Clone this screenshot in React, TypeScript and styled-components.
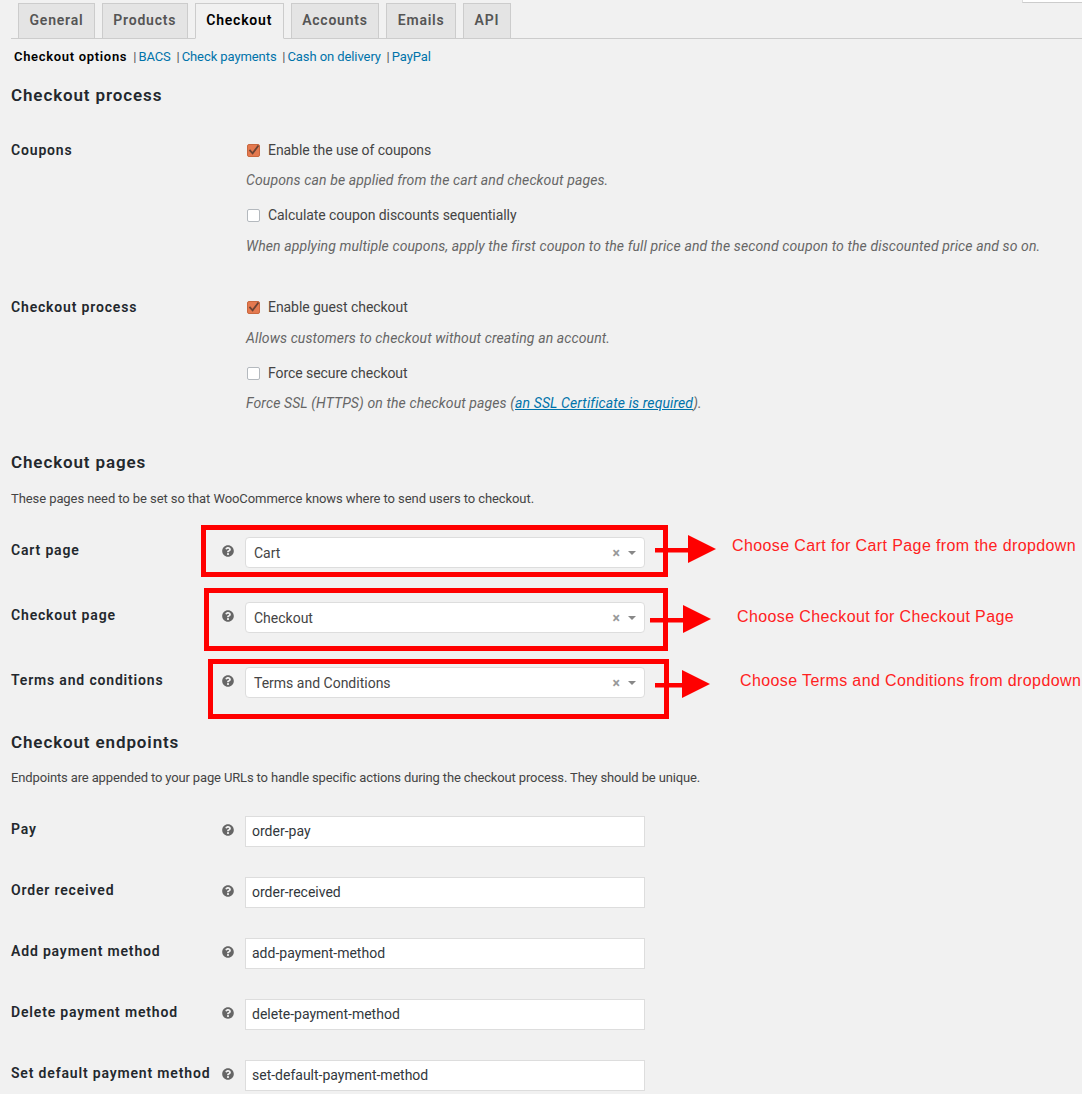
import React from "react";
import styled, { createGlobalStyle } from "styled-components";
import { FaQuestionCircle } from "react-icons/fa";

const Global = createGlobalStyle`
  html, body { margin: 0; padding: 0; background: #f1f1f1; }
  body { font-family: Roboto, "Liberation Sans", sans-serif; font-size: 14px; color: #444; }
`;

const Page = styled.div`
  position: relative;
  width: 1082px;
  height: 1094px;
  overflow: hidden;
  padding-left: 11px;
  box-sizing: border-box;
`;

const Corner = styled.div`
  position: absolute;
  top: 0;
  right: 0;
  width: 59px;
  height: 2px;
  background: #fff;
  border-left: 1px solid #ddd;
  border-bottom: 1px solid #ccc;
`;

const TabBar = styled.nav`
  display: flex;
  gap: 7px;
  padding: 3px 0 0 7px;
  height: 35px;
  border-bottom: 1px solid #ccc;
`;

const Tab = styled.a<{ $active?: boolean }>`
  box-sizing: border-box;
  padding: 0 10.5px 2px;
  display: flex;
  align-items: center;
  font-size: 14px;
  font-weight: 600;
  letter-spacing: 0.78px;
  color: ${(p) => (p.$active ? "#000" : "#555")};
  background: ${(p) => (p.$active ? "#f1f1f1" : "#e4e4e4")};
  border: 1px solid #ccc;
  border-bottom: ${(p) => (p.$active ? "1px solid #f1f1f1" : "none")};
  height: ${(p) => (p.$active ? "36px" : "35px")};
`;

const SubNav = styled.div`
  display: flex;
  align-items: center;
  height: 20px;
  margin-top: 7px;
  padding-left: 3px;
  font-size: 13px;
  color: #555;
`;

const SubCurrent = styled.b`
  color: #000;
  font-weight: 600;
  letter-spacing: 0.68px;
  margin-right: 6px;
`;

const SubLink = styled.a`
  color: #0073aa;
  margin: 0 5.7px 0 2px;
  letter-spacing: -0.08px;
`;

const Heading = styled.h2<{ $top: number }>`
  margin: ${(p) => p.$top}px 0 0;
  font-size: 17px;
  line-height: 22px;
  font-weight: 600;
  letter-spacing: 0.88px;
  color: #23282d;
`;

const Intro = styled.p<{ $top: number; $track: number }>`
  margin: ${(p) => p.$top}px 0 0;
  font-size: 13px;
  line-height: 20px;
  letter-spacing: ${(p) => p.$track}px;
  color: #444;
`;

const OptionRow = styled.div<{ $top: number }>`
  display: flex;
  margin-top: ${(p) => p.$top}px;
`;

const Label = styled.div`
  width: 235px;
  flex: none;
  font-weight: 600;
  letter-spacing: 0.83px;
  line-height: 20px;
  color: #23282d;
`;

const Options = styled.div`
  display: flex;
  flex-direction: column;
`;

const CheckLine = styled.label<{ $gap?: number }>`
  display: flex;
  align-items: center;
  height: 20px;
  margin-top: ${(p) => p.$gap ?? 0}px;
  letter-spacing: -0.06px;
  color: #444;
`;

const Box = styled.span<{ $on?: boolean }>`
  width: 11px;
  height: 11px;
  margin: 0 8px 0 1px;
  border: 1px solid ${(p) => (p.$on ? "#c9683f" : "#b4b9be")};
  border-radius: 2px;
  background: ${(p) => (p.$on ? "#e4794f" : "#fff")};
  display: flex;
  align-items: center;
  justify-content: center;
`;

const CheckMark = styled.svg`
  overflow: visible;
`;

const Description = styled.div<{ $top: number }>`
  margin-top: ${(p) => p.$top}px;
  height: 20px;
  line-height: 20px;
  font-style: italic;
  letter-spacing: 0.11px;
  color: #666;
`;

const DescLink = styled.a`
  color: #0073aa;
  text-decoration: underline;
`;

const FieldGroup = styled.div<{ $top: number }>`
  margin-top: ${(p) => p.$top}px;
`;

const FieldRow = styled.div<{ $pitch: number }>`
  display: flex;
  height: ${(p) => p.$pitch}px;
`;

const FieldLabel = styled(Label)`
  width: 211px;
  padding-top: 3px;
`;

const HelpCell = styled.div`
  width: 23px;
  flex: none;
  padding-top: 8px;
  color: #666;
  font-size: 12px;
  line-height: 12px;
`;

const Select = styled.div`
  width: 400px;
  height: 31px;
  box-sizing: border-box;
  background: #fff;
  border: 1px solid #ddd;
  border-radius: 4px;
  display: flex;
  align-items: center;
  padding: 0 8px;
  color: #444;
`;

const SelectValue = styled.span`
  flex: 1;
`;

const Clear = styled.span`
  color: #999;
  font-size: 14px;
  font-weight: 700;
  margin-right: 8px;
`;

const Caret = styled.span`
  width: 0;
  height: 0;
  border-left: 4px solid transparent;
  border-right: 4px solid transparent;
  border-top: 4px solid #888;
`;

const TextInput = styled.input`
  width: 400px;
  height: 31px;
  box-sizing: border-box;
  background: #fff;
  border: 1px solid #ddd;
  padding: 0 6px 2px;
  font: inherit;
  color: #32373c;
  outline: none;
`;

/* annotations painted over the screenshot */
const RedFrame = styled.div<{ $x: number; $y: number; $w: number; $h: number }>`
  position: absolute;
  left: ${(p) => p.$x}px;
  top: ${(p) => p.$y}px;
  width: ${(p) => p.$w}px;
  height: ${(p) => p.$h}px;
  box-sizing: border-box;
  border: 5px solid #f00;
`;

const Note = styled.div<{ $x: number; $y: number }>`
  position: absolute;
  left: ${(p) => p.$x}px;
  top: ${(p) => p.$y}px;
  font-family: "Liberation Sans", Arial, sans-serif;
  font-size: 16px;
  line-height: 20px;
  letter-spacing: 0.39px;
  white-space: nowrap;
  color: #f22;
`;

const ArrowSvg = styled.svg<{ $x: number; $y: number }>`
  position: absolute;
  left: ${(p) => p.$x}px;
  top: ${(p) => p.$y}px;
`;

const Arrow = ({ x, y, stem }: { x: number; y: number; stem: number }) => (
  <ArrowSvg $x={x} $y={y} width={stem + 28} height={28} viewBox={`0 0 ${stem + 28} 28`}>
    <rect x={0} y={13} width={stem + 1} height={4.5} fill="#f00" />
    <polygon points={`${stem},0 ${stem + 28},14 ${stem},28`} fill="#f00" />
  </ArrowSvg>
);

const Check = () => (
  <CheckMark width="9" height="9" viewBox="0 0 10 10">
    <path d="M0.5 4.4 L4 8.2 L10.5 -0.6" fill="none" stroke="#6a4334" strokeWidth="2" />
  </CheckMark>
);

const Help = () => (
  <HelpCell>
    <FaQuestionCircle />
  </HelpCell>
);

const SelectRow = ({ label, value, pitch }: { label: string; value: string; pitch: number }) => (
  <FieldRow $pitch={pitch}>
    <FieldLabel>{label}</FieldLabel>
    <Help />
    <Select>
      <SelectValue>{value}</SelectValue>
      <Clear>×</Clear>
      <Caret />
    </Select>
  </FieldRow>
);

const InputRow = ({ label, value }: { label: string; value: string }) => (
  <FieldRow $pitch={61}>
    <FieldLabel>{label}</FieldLabel>
    <Help />
    <TextInput defaultValue={value} />
  </FieldRow>
);

export default function App() {
  return (
    <Page>
      <Global />
      <Corner />
      <TabBar>
        <Tab>General</Tab>
        <Tab>Products</Tab>
        <Tab $active>Checkout</Tab>
        <Tab>Accounts</Tab>
        <Tab>Emails</Tab>
        <Tab>API</Tab>
      </TabBar>
      <SubNav>
        <SubCurrent>Checkout options</SubCurrent>|<SubLink>BACS</SubLink>|<SubLink>Check payments</SubLink>|
        <SubLink>Cash on delivery</SubLink>|<SubLink>PayPal</SubLink>
      </SubNav>

      <Heading $top={18}>Checkout process</Heading>
      <OptionRow $top={34}>
        <Label>Coupons</Label>
        <Options>
          <CheckLine>
            <Box $on>
              <Check />
            </Box>
            Enable the use of coupons
          </CheckLine>
          <Description $top={10}>Coupons can be applied from the cart and checkout pages.</Description>
          <CheckLine $gap={15}>
            <Box />
            Calculate coupon discounts sequentially
          </CheckLine>
          <Description $top={11}>
            When applying multiple coupons, apply the first coupon to the full price and the second coupon to the
            discounted price and so on.
          </Description>
        </Options>
      </OptionRow>
      <OptionRow $top={41}>
        <Label>Checkout process</Label>
        <Options>
          <CheckLine>
            <Box $on>
              <Check />
            </Box>
            Enable guest checkout
          </CheckLine>
          <Description $top={11}>Allows customers to checkout without creating an account.</Description>
          <CheckLine $gap={15}>
            <Box />
            Force secure checkout
          </CheckLine>
          <Description $top={10}>
            Force SSL (HTTPS) on the checkout pages (<DescLink>an SSL Certificate is required</DescLink>).
          </Description>
        </Options>
      </OptionRow>

      <Heading $top={38}>Checkout pages</Heading>
      <Intro $top={16} $track={-0.08}>
        These pages need to be set so that WooCommerce knows where to send users to checkout.
      </Intro>
      <FieldGroup $top={28}>
        <SelectRow label="Cart page" value="Cart" pitch={65} />
        <SelectRow label="Checkout page" value="Checkout" pitch={65} />
        <SelectRow label="Terms and conditions" value="Terms and Conditions" pitch={64} />
      </FieldGroup>

      <Heading $top={0}>Checkout endpoints</Heading>
      <Intro $top={15} $track={-0.14}>
        Endpoints are appended to your page URLs to handle specific actions during the checkout process. They should be
        unique.
      </Intro>
      <FieldGroup $top={28}>
        <InputRow label="Pay" value="order-pay" />
        <InputRow label="Order received" value="order-received" />
        <InputRow label="Add payment method" value="add-payment-method" />
        <InputRow label="Delete payment method" value="delete-payment-method" />
        <InputRow label="Set default payment method" value="set-default-payment-method" />
      </FieldGroup>

      <RedFrame $x={201} $y={525} $w={467} $h={52} />
      <RedFrame $x={204} $y={588} $w={464} $h={63} />
      <RedFrame $x={208} $y={659} $w={461} $h={60} />
      <Arrow x={655} y={535} stem={33} />
      <Arrow x={650} y={605} stem={33} />
      <Arrow x={655} y={670} stem={27} />
      <Note $x={732} $y={536}>Choose Cart for Cart Page from the dropdown</Note>
      <Note $x={737} $y={607}>Choose Checkout for Checkout Page</Note>
      <Note $x={740} $y={671}>Choose Terms and Conditions from dropdown</Note>
    </Page>
  );
}
